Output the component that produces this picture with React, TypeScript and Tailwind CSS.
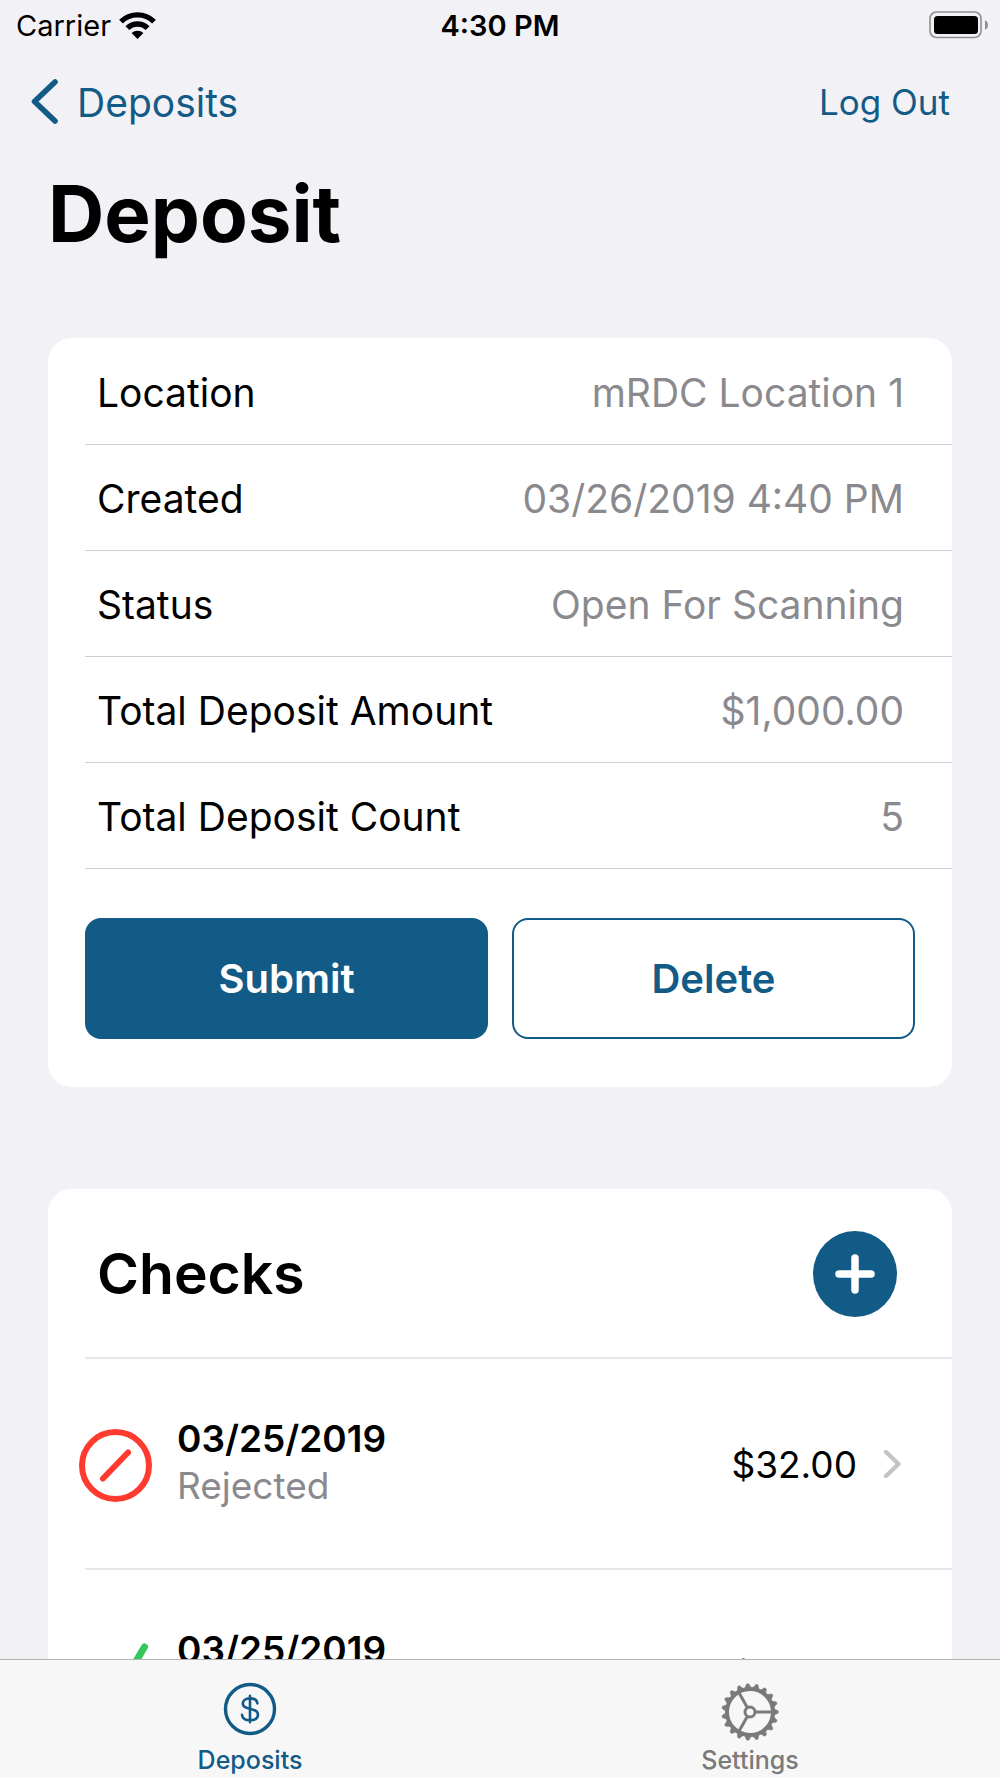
type Detail = {
    label: string;
    value: string;
};

type Check = {
    id: number;
    date: string;
    status: "Rejected" | "Accepted";
    amount: string;
};

const details: Detail[] = [
    { label: "Location", value: "mRDC Location 1" },
    { label: "Created", value: "03/26/2019 4:40 PM" },
    { label: "Status", value: "Open For Scanning" },
    { label: "Total Deposit Amount", value: "$1,000.00" },
    { label: "Total Deposit Count", value: "5" },
];

const checks: Check[] = [
    { id: 1, date: "03/25/2019", status: "Rejected", amount: "$32.00" },
    { id: 2, date: "03/25/2019", status: "Accepted", amount: "$32.00" },
];

// 19 teeth, evenly spread, starting on the right-hand spoke
const teeth = Array.from({ length: 19 }, (_, i) => (i * 360) / 19);

function WifiIcon() {
    return (
        <svg viewBox="0 0 37 27" className="h-[27px] w-[37px]" aria-hidden="true">
            <g fill="none" stroke="currentColor" strokeWidth="5.4">
                <path d="M2 9.6a23.5 23.5 0 0 1 33 0" />
                <path d="M8.4 16.2a14.3 14.3 0 0 1 20.2 0" />
            </g>
            <path d="M12.6 21.1a8.4 8.4 0 0 1 11.8 0L18.5 27z" fill="currentColor" />
        </svg>
    );
}

function BatteryIcon() {
    return (
        <svg viewBox="0 0 59 28" className="h-7 w-[59px]" aria-hidden="true">
            <rect x="1" y="1" width="51" height="25.5" rx="6.5" fill="none" stroke="#8e8e93" strokeWidth="1.6" />
            <rect x="5" y="5" width="44" height="18" rx="3.5" fill="#000" />
            <path d="M56 9.2c4 1.6 4 8 0 9.6z" fill="#8e8e93" />
        </svg>
    );
}

function BackIcon() {
    return (
        <svg viewBox="0 0 28 46" className="h-[46px] w-7" fill="none" stroke="currentColor" strokeWidth="5.6" strokeLinecap="round" strokeLinejoin="round" aria-hidden="true">
            <path d="M24 3L3.5 22.5 24 42" />
        </svg>
    );
}

function RejectedIcon() {
    return (
        <svg viewBox="0 0 74 74" className="h-[74px] w-[74px]" fill="none" stroke="#ff3b30" strokeWidth="6" strokeLinecap="round" aria-hidden="true">
            <circle cx="36.5" cy="37.5" r="33.5" />
            <path d="M24 50.5l25-26" />
        </svg>
    );
}

function AcceptedIcon() {
    return (
        <svg viewBox="0 0 74 74" className="h-[74px] w-[74px]" fill="none" stroke="#34c759" strokeWidth="7" strokeLinecap="round" strokeLinejoin="round" aria-hidden="true">
            <path d="M21 47l13 14L65.500 8" />
        </svg>
    );
}

function ChevronIcon() {
    return (
        <svg viewBox="0 0 18 30" className="h-[30px] w-[18px]" fill="none" stroke="#c4c4c6" strokeWidth="4.4" strokeLinecap="round" strokeLinejoin="round" aria-hidden="true">
            <path d="M3 3l12.5 12L3 27" />
        </svg>
    );
}

function DollarIcon() {
    return (
        <svg viewBox="0 0 54 54" className="h-[54px] w-[54px]" fill="none" stroke="currentColor" strokeLinecap="round" aria-hidden="true">
            <circle cx="27" cy="27" r="24.5" strokeWidth="3.4" />
            <path d="M27 13.8v26.4M34.4 21.4c-.4-3.2-3.4-5-7.4-5-4.2 0-7.2 2-7.2 5.2 0 2.8 2.2 4.2 6 5l2.8.6c4 .9 6.4 2.4 6.4 5.6 0 3.4-3.2 5.4-8 5.4-4.6 0-7.6-2-8-5.4" strokeWidth="2.6" />
        </svg>
    );
}

function GearIcon() {
    return (
        <svg viewBox="0 0 60 60" className="h-[60px] w-[60px]" fill="none" stroke="currentColor" aria-hidden="true">
            <circle cx="30" cy="30" r="23" strokeWidth="4" />
            <circle cx="30" cy="30" r="5" strokeWidth="3" />
            <path d="M35.5 30H53M27.2 25.2L18.5 10.1M27.2 34.8L18.5 49.9" strokeWidth="3" />
            {teeth.map((angle) => (
                <path
                    key={angle}
                    d="M53.5 26.6L58.2 29v2L53.5 33.4z"
                    fill="currentColor"
                    strokeWidth="0.6"
                    transform={`rotate(${angle} 30 30)`}
                />
            ))}
        </svg>
    );
}

function StatusBar() {
    return (
        <div className="grid h-[50px] shrink-0 grid-cols-3 items-center px-4 text-[29px] leading-none">
            <div className="flex items-center gap-2">
                <span>Carrier</span>
                <WifiIcon />
            </div>
            <span className="text-center font-semibold">4:30 PM</span>
            <div className="-mr-1 flex justify-end">
                <BatteryIcon />
            </div>
        </div>
    );
}

function DetailRow({ item }: { item: Detail }) {
    return (
        <div className="ml-[37px] flex h-[106px] items-center justify-between border-b border-[#d0d0d2] pt-0.5 pr-12 pl-3">
            <dt>{item.label}</dt>
            <dd className="text-[#8a8a8e]">{item.value}</dd>
        </div>
    );
}

function CheckRow({ check }: { check: Check }) {
    return (
        <li className="ml-[37px] border-b-2 border-[#e8e8e8]">
            <a href="#check" className="flex h-[209px] items-center pr-[51px] text-[37px] leading-[47px]">
                <span className="-ml-1.5 shrink-0 pt-0.5">
                    {check.status === "Rejected" ? <RejectedIcon /> : <AcceptedIcon />}
                </span>
                <span className="ml-6 flex flex-1 flex-col pb-1">
                    <span className="font-semibold">{check.date}</span>
                    <span className="text-[#8a8a8e]">{check.status}</span>
                </span>
                <span className="mr-[26px] pt-0.5">{check.amount}</span>
                <ChevronIcon />
            </a>
        </li>
    );
}

function TabBar() {
    return (
        <nav className="grid h-[119px] shrink-0 grid-cols-2 border-t border-[#b4b4b6] bg-[#f7f7f7] text-[25px] leading-8 font-medium">
            <a href="#deposits" aria-current="page" className="flex flex-col items-center pt-5 text-[#125b86]">
                <span className="flex h-16 items-center pb-1.5">
                    <DollarIcon />
                </span>
                <span>Deposits</span>
            </a>
            <a href="#settings" className="flex flex-col items-center pt-5 text-[#7a7a7a]">
                <span className="flex h-16 items-center">
                    <GearIcon />
                </span>
                <span>Settings</span>
            </a>
        </nav>
    );
}

export default function App() {
    return (
        <div className="flex h-screen flex-col bg-[#f2f1f6] font-['Inter',sans-serif] text-black">
            <StatusBar />
            <header className="shrink-0">
                <div className="flex h-[104px] items-center justify-between pr-[50px] pl-[31px] text-[#125b86]">
                    <a href="#deposits" className="flex items-center gap-[18px] text-[39px] leading-none">
                        <BackIcon />
                        <span>Deposits</span>
                    </a>
                    <button type="button" className="text-[35px] leading-none">Log Out</button>
                </div>
                <h1 className="px-12 text-[78px] leading-[120px] font-bold">Deposit</h1>
            </header>

            <main className="min-h-0 flex-1 overflow-y-auto px-12 pt-16 [scrollbar-width:none]">
                <section aria-label="Deposit details" className="rounded-3xl bg-white text-[39px] leading-none">
                    <dl className="pt-px">
                        {details.map((item) => (
                            <DetailRow key={item.label} item={item} />
                        ))}
                    </dl>
                    <div className="grid grid-cols-2 gap-6 px-[37px] pt-[49px] pb-12 text-[40px] font-semibold">
                        <button type="button" className="h-[121px] rounded-2xl bg-[#125b86] text-white">Submit</button>
                        <button type="button" className="h-[121px] rounded-2xl border-2 border-[#125b86] text-[#125b86]">Delete</button>
                    </div>
                </section>

                <section aria-label="Checks" className="mt-[102px] rounded-3xl bg-white">
                    <div className="ml-[37px] flex h-[170px] items-center justify-between border-b-2 border-[#e8e8e8] pt-0.5 pr-[55px] pl-3">
                        <h2 className="text-[57px] font-semibold">Checks</h2>
                        <button type="button" aria-label="Add check" className="flex h-[86px] w-[84px] items-center justify-center rounded-[50%] bg-[#125b86] text-white">
                            <svg viewBox="0 0 40 40" className="h-10 w-10" stroke="currentColor" strokeWidth="7.5" strokeLinecap="round" aria-hidden="true">
                                <path d="M20 4v32M4 20h32" />
                            </svg>
                        </button>
                    </div>
                    <ul>
                        {checks.map((check) => (
                            <CheckRow key={check.id} check={check} />
                        ))}
                    </ul>
                </section>
            </main>

            <TabBar />
        </div>
    );
}
